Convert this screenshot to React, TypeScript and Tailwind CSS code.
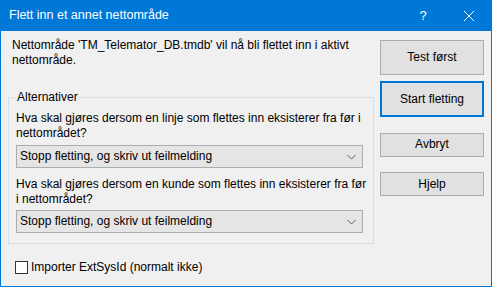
import type { ReactNode } from 'react'

const FONT = { fontFamily: '"Liberation Sans", Arial, sans-serif' }

function Button({ children, primary, h }: { children: ReactNode; primary?: boolean; h: string }) {
  return (
    <button
      type="button"
      className={`w-[104px] ${h} bg-[#e1e1e1] text-[12px] text-black leading-[15px] ${
        primary ? 'border-2 border-[#0078d7]' : 'border border-[#adadad]'
      }`}
    >
      {children}
    </button>
  )
}

function Combo({ value }: { value: string }) {
  return (
    <div className="h-[23px] w-[347px] bg-[#e5e5e5] border border-[#adadad] flex items-center pl-[3px] pr-[6px]">
      <span className="flex-1 text-[12px] leading-[15px] whitespace-nowrap">{value}</span>
      <svg width="9" height="6" viewBox="0 0 9 6" className="text-[#606060]">
        <polyline points="0.5,1 4.5,5 8.5,1" fill="none" stroke="currentColor" strokeWidth="1" />
      </svg>
    </div>
  )
}

export default function App() {
  return (
    <div style={FONT} className="w-[492px] h-[287px] flex flex-col border-x border-b border-[#0078d7] bg-[#f0f0f0] text-black">
      {/* title bar */}
      <div className="h-[31px] -mx-px bg-[#0078d7] flex items-center text-white text-[12.5px]">
        <span className="pl-[9px] flex-1">Flett inn et annet nettområde</span>
        <div className="w-[46px] h-full flex items-center justify-center text-[13px]">?</div>
        <div className="w-[46px] h-full flex items-center justify-center">
          <svg width="10" height="10" viewBox="0 0 10 10">
            <path d="M0 0L10 10M10 0L0 10" stroke="white" strokeWidth="1" />
          </svg>
        </div>
      </div>

      <div className="flex-1 flex">
        {/* left column */}
        <div className="w-[371px] pl-[7px] pt-[7px]">
          <p className="pl-[4px] text-[12px] leading-[15px] whitespace-nowrap">
            Nettområde 'TM_Telemator_DB.tmdb' vil nå bli flettet inn i aktivt
            <br />
            nettområde.
          </p>

          <fieldset className="mt-[22px] w-[364px] border border-[#dcdcdc] px-[7px] pb-[10px]">
            <legend className="px-[1px] text-[12px] leading-[15px]">Alternativer</legend>
            <p className="pt-[6px] text-[12px] leading-[15px] whitespace-nowrap">
              Hva skal gjøres dersom en linje som flettes inn eksisterer fra før i
              <br />
              nettområdet?
            </p>
            <div className="mt-[4px]">
              <Combo value="Stopp fletting, og skriv ut feilmelding" />
            </div>
            <p className="mt-[9px] text-[12px] leading-[15px] whitespace-nowrap">
              Hva skal gjøres dersom en kunde som flettes inn eksisterer fra før
              <br />i nettområdet?
            </p>
            <div className="mt-[3px]">
              <Combo value="Stopp fletting, og skriv ut feilmelding" />
            </div>
          </fieldset>

          <label className="mt-[16px] ml-[7px] flex items-center gap-[3px] text-[12px] leading-[15px]">
            <span className="w-[13px] h-[13px] bg-white border border-[#333333]" />
            Importer ExtSysId (normalt ikke)
          </label>
        </div>

        {/* right column */}
        <div className="pl-[8px] pt-[9px] flex flex-col">
          <Button h="h-[35px]">Test først</Button>
          <div className="mt-[6px]">
            <Button h="h-[36px]" primary>Start fletting</Button>
          </div>
          <div className="mt-[14px]">
            <Button h="h-[24px]">Avbryt</Button>
          </div>
          <div className="mt-[14px]">
            <Button h="h-[24px]">Hjelp</Button>
          </div>
        </div>
      </div>
    </div>
  )
}
